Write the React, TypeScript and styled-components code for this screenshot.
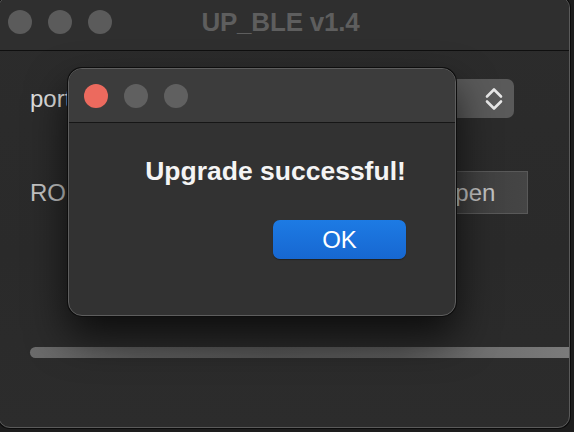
import * as React from "react";
import styled, { createGlobalStyle } from "styled-components";

const GlobalStyle = createGlobalStyle`
  html, body {
    margin: 0;
    padding: 0;
    width: 574px;
    height: 432px;
    overflow: hidden;
    background: #1d1d1d;
    font-family: "Liberation Sans", Arial, sans-serif;
  }
  * {
    box-sizing: border-box;
  }
`;

const SWindow = styled.div`
  position: relative;
  margin: -4px 0 0 -2px;
  width: 572px;
  height: 432px;
  border: 1px solid #5a5a5a;
  border-radius: 12px;
  box-shadow: 0 0 0 1px #0b0b0b;
  background: linear-gradient(180deg, #2c2c2c 0%, #2a2a2a 60%, #2c2c2c 100%);
  overflow: hidden;
  display: flex;
  flex-direction: column;
`;

const STitleBar = styled.div`
  height: 54px;
  padding: 0 16px 3px 9px;
  display: grid;
  grid-template-columns: 1fr auto 1fr;
  align-items: center;
  background: #2f2f2f;
  border-bottom: 1px solid #0f0f0f;
`;

const SLights = styled.div<{ $gap: number }>`
  display: flex;
  gap: ${(p) => p.$gap}px;
`;

const SLight = styled.span<{ $color: string }>`
  width: 24px;
  height: 24px;
  border-radius: 50%;
  background: ${(p) => p.$color};
`;

const STitle = styled.div`
  font-size: 26px;
  font-weight: bold;
  color: #5e5e5e;
  letter-spacing: -0.2px;
`;

const SContent = styled.div`
  flex: 1;
  padding: 28px 0 0 31px;
  display: flex;
  flex-direction: column;
`;

const SRow = styled.div<{ $right: number; $top: number; $height: number }>`
  display: flex;
  align-items: center;
  justify-content: space-between;
  height: ${(p) => p.$height}px;
  margin-top: ${(p) => p.$top}px;
  padding-right: ${(p) => p.$right}px;
`;

const SLabel = styled.span<{ $color: string }>`
  font-size: 24px;
  color: ${(p) => p.$color};
`;

const SSelect = styled.div`
  width: 170px;
  height: 39px;
  border-radius: 7px;
  background: #5a5a5a;
  display: flex;
  align-items: center;
  justify-content: flex-end;
  padding-right: 11px;
  color: #e8e8e8;
`;

const SOpenButton = styled.div`
  width: 124px;
  height: 43px;
  border: 1px solid #595959;
  background: linear-gradient(90deg, #3a3a3a 0%, #454545 100%);
  color: #c2c2c2;
  font-size: 24px;
  display: flex;
  align-items: center;
  justify-content: center;
`;

const SProgress = styled.div`
  margin-top: 133px;
  margin-right: -2px;
  height: 11px;
  border-radius: 6px 0 0 6px;
  background: linear-gradient(
    90deg,
    #6c6c6c 0%,
    #5a5a5a 20%,
    #545454 45%,
    #585858 68%,
    #707070 85%,
    #7b7b7b 100%
  );
`;

const SDialog = styled.div`
  position: absolute;
  left: 69px;
  top: 71px;
  width: 388px;
  height: 248px;
  border: 1px solid #5e5e5e;
  border-radius: 14px;
  background: #323232;
  box-shadow: 0 0 0 1px #0e0e0e, 0 20px 40px rgba(0, 0, 0, 0.7);
  overflow: hidden;
  display: flex;
  flex-direction: column;
`;

const SDialogBar = styled.div`
  height: 54px;
  padding-left: 15px;
  display: flex;
  align-items: center;
  background: #3c3c3c;
  border-bottom: 1px solid #161616;
`;

const SDialogBody = styled.div`
  padding: 33px 49px 0 76px;
  display: flex;
  flex-direction: column;
  align-items: stretch;
`;

const SMessage = styled.div`
  font-size: 26.5px;
  line-height: 30px;
  font-weight: bold;
  color: #f4f4f4;
  text-align: center;
`;

const SButtonRow = styled.div`
  margin-top: 34px;
  display: flex;
  justify-content: flex-end;
`;

const SOkButton = styled.div`
  width: 133px;
  height: 39px;
  border-radius: 7px;
  background: linear-gradient(180deg, #1d7be4 0%, #1767d1 100%);
  box-shadow: 0 1px 1px rgba(0, 0, 0, 0.35);
  color: #ffffff;
  font-size: 24px;
  display: flex;
  align-items: center;
  justify-content: center;
`;

const Chevrons = () => (
  <svg width="18" height="24" viewBox="0 0 18 24" fill="none">
    <path
      d="M2 9.5 L9 2.5 L16 9.5"
      stroke="currentColor"
      strokeWidth="2.6"
      strokeLinecap="round"
      strokeLinejoin="round"
    />
    <path
      d="M2 14.5 L9 21.5 L16 14.5"
      stroke="currentColor"
      strokeWidth="2.6"
      strokeLinecap="round"
      strokeLinejoin="round"
    />
  </svg>
);

const App = () => {
  return (
    <>
      <GlobalStyle />
      <SWindow>
        <STitleBar>
          <SLights $gap={16}>
            <SLight $color="#5b5b5b" />
            <SLight $color="#5b5b5b" />
            <SLight $color="#5b5b5b" />
          </SLights>
          <STitle>UP_BLE v1.4</STitle>
          <div />
        </STitleBar>
        <SContent>
          <SRow $right={55} $top={0} $height={39}>
            <SLabel $color="#dedede">port:</SLabel>
            <SSelect>
              <Chevrons />
            </SSelect>
          </SRow>
          <SRow $right={41} $top={53} $height={43}>
            <SLabel $color="#c4c4c4">ROM:</SLabel>
            <SOpenButton>Open</SOpenButton>
          </SRow>
          <SProgress />
        </SContent>
        <SDialog>
          <SDialogBar>
            <SLights $gap={16}>
              <SLight $color="#ec6a5e" />
              <SLight $color="#606060" />
              <SLight $color="#606060" />
            </SLights>
          </SDialogBar>
          <SDialogBody>
            <SMessage>Upgrade successful!</SMessage>
            <SButtonRow>
              <SOkButton>OK</SOkButton>
            </SButtonRow>
          </SDialogBody>
        </SDialog>
      </SWindow>
    </>
  );
};

export default App;
